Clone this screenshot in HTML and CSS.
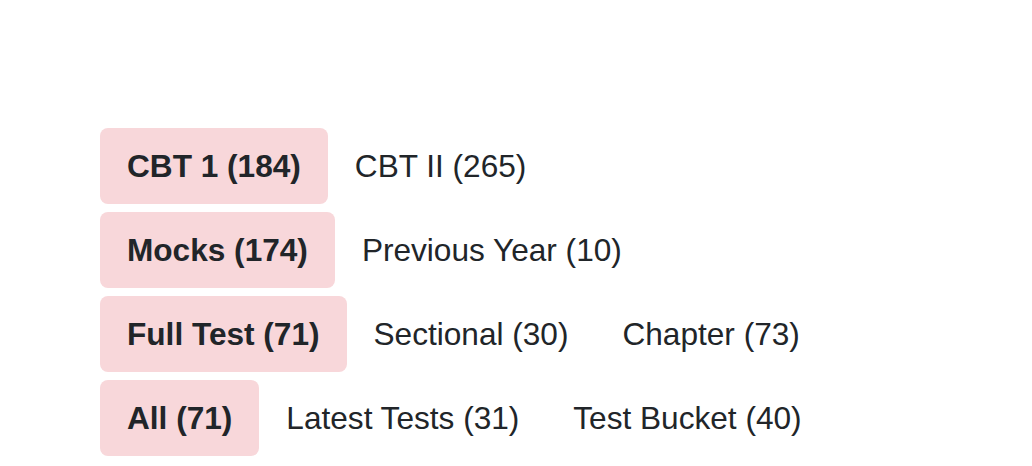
FILE: index.html
```html
<!DOCTYPE html>
<html lang="en">
<head>
<meta charset="UTF-8" />
<meta name="viewport" content="width=device-width, initial-scale=1.0"/>
<title>Test Filters</title>
<link rel="stylesheet" href="styles.css">
</head>
<body>
<main class="filters">
  <div class="tab-row">
    <span class="tab active">CBT 1 (184)</span>
    <span class="tab">CBT II (265)</span>
  </div>
  <div class="tab-row">
    <span class="tab active">Mocks (174)</span>
    <span class="tab">Previous Year (10)</span>
  </div>
  <div class="tab-row">
    <span class="tab active">Full Test (71)</span>
    <span class="tab">Sectional (30)</span>
    <span class="tab">Chapter (73)</span>
  </div>
  <div class="tab-row">
    <span class="tab active">All (71)</span>
    <span class="tab">Latest Tests (31)</span>
    <span class="tab">Test Bucket (40)</span>
  </div>
</main>
</body>
</html>
```

FILE: styles.css
```css
body {
  margin: 0;
  background: #ffffff;
  color: #212529;
  font-family: "Liberation Sans", Arial, sans-serif;
}

.filters {
  display: flex;
  flex-direction: column;
  gap: 8px;
  padding: 128px 0 0 100px;
}

.tab-row {
  display: flex;
}

.tab {
  display: block;
  padding: 19px 27px;
  font-size: 31.6px;
  line-height: 38px;
  border-radius: 8px;
  white-space: nowrap;
}

.tab.active {
  background: #f8d7da;
  font-weight: bold;
}
```
